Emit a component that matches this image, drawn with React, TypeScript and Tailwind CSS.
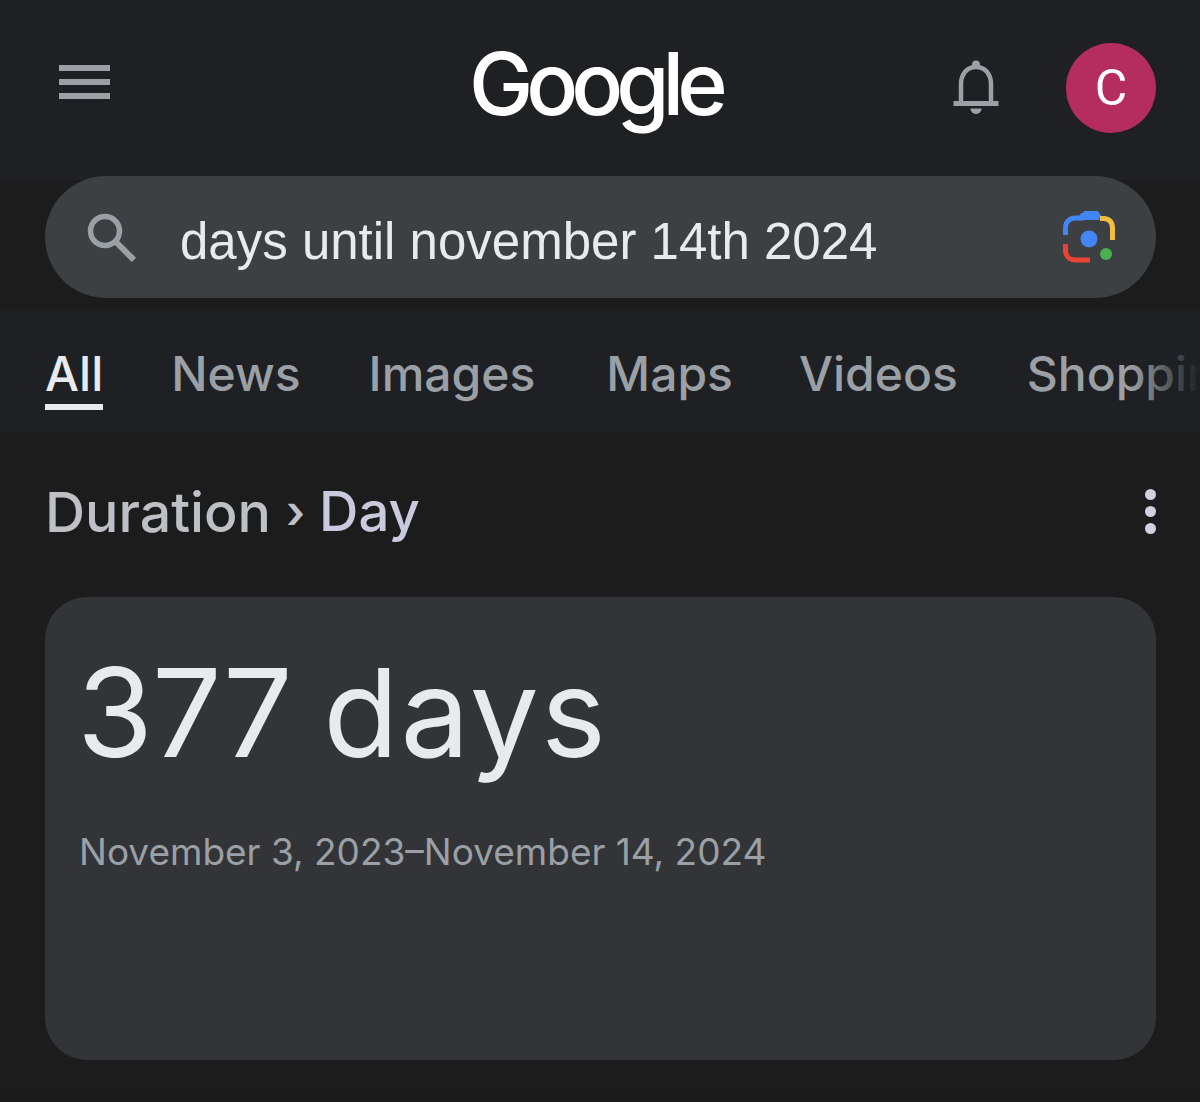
import React from 'react';

const tabs = [
  { label: 'News', className: 'ml-[68px]' },
  { label: 'Images', className: 'ml-[68px]' },
  { label: 'Maps', className: 'ml-[71px]' },
  { label: 'Videos', className: 'ml-[66px]' },
  { label: 'Shopping', className: 'ml-[69px]' },
];

const BellIcon = () => (
  <svg width="46" height="56" viewBox="0 0 46 56" fill="none">
    <circle cx="23" cy="4.5" r="4" fill="#9aa0a6" />
    <path d="M8 43V24C8 14 14 7 23 7s15 7 15 17v19" stroke="#9aa0a6" strokeWidth="4.5" />
    <rect x="0.5" y="41" width="45" height="5" fill="#9aa0a6" />
    <path d="M17.5 48.5h11c0 3-2.500 5.500-5.500 5.500s-5.500-2.500-5.500-5.500z" fill="#9aa0a6" />
  </svg>
);

const SearchIcon = () => (
  <svg width="50" height="50" viewBox="0 0 50 50" fill="none">
    <circle cx="19" cy="19" r="14.500" stroke="#9aa0a6" strokeWidth="5.500" />
    <path d="M29 29l19 19" stroke="#9aa0a6" strokeWidth="6" />
  </svg>
);

const LensIcon = () => (
  <svg width="52" height="52" viewBox="0 0 52 52" fill="none">
    <path d="M2.500 24v-7c0-6 4-10 10-10h7l3-4.500h11l3 4.500" stroke="#4285f4" strokeWidth="5" fill="none" />
    <path d="M18 2h15l4 7H14z" fill="#4285f4" />
    <path d="M37 7.500h3.500c6 0 9 4 9 10V29" stroke="#f3bd42" strokeWidth="5" />
    <path d="M2.500 33v6c0 6 4 10 10 10H27" stroke="#ea4335" strokeWidth="5" />
    <circle cx="26" cy="28" r="8.500" fill="#4285f4" />
    <circle cx="43" cy="43" r="6" fill="#4caf50" />
  </svg>
);

export default function App() {
  return (
    <div className="h-[1102px] w-[1200px] overflow-hidden bg-[#1c1c1d] font-['Inter',sans-serif]">
      {/* Header */}
      <header className="flex h-[180px] items-start bg-[#1f2023] pl-[59px]">
        <div className="mt-[65px] flex h-[34px] w-[51px] flex-col justify-between">
          <div className="h-[6px] bg-[#9aa0a6]" />
          <div className="h-[6px] bg-[#9aa0a6]" />
          <div className="h-[6px] bg-[#9aa0a6]" />
        </div>
        <div className="ml-[359px] mt-[29px] w-[282px] text-[86px] leading-[110px] font-medium tracking-[-7px] text-white">
          Google
        </div>
        <div className="ml-[202px] mt-[60px]">
          <BellIcon />
        </div>
        <div className="ml-[67px] mt-[43px] flex h-[90px] w-[90px] items-center justify-center rounded-full bg-[#b52c5f] text-[50px] text-white font-['Roboto',sans-serif]">
          C
        </div>
      </header>

      {/* Search */}
      <div className="relative mx-[45px] -mt-[4px] flex h-[122px] w-[1111px] items-center rounded-[61px] bg-[#3c4043] pl-[41px] pr-[41px]">
        <SearchIcon />
        <span className="ml-[44px] flex-1 pt-[8px] text-[51px] leading-none text-[#e8eaed] font-['Liberation_Sans',sans-serif]">
          days until november 14th 2024
        </span>
        <LensIcon />
      </div>

      {/* Tabs */}
      <nav className="relative mt-[12px] flex h-[122px] overflow-hidden whitespace-nowrap bg-[#1f2023] pl-[45px] text-[48px] font-medium text-[#9aa0a6]">
        <div className="relative pt-[28px] text-[#e8eaed]">
          All
          <div className="absolute bottom-[22px] left-0 right-0 h-[6px] bg-[#e8eaed]" />
        </div>
        {tabs.map((t) => (
          <div key={t.label} className={`${t.className} pt-[28px]`}>
            {t.label}
          </div>
        ))}
        <div className="absolute inset-y-0 right-0 w-[70px] bg-gradient-to-r from-transparent to-[#1f2023]" />
      </nav>

      {/* Breadcrumb */}
      <div className="flex h-[165px] items-center pb-[6px] pl-[45px] pr-[44px] font-medium">
        <span className="text-[55.500px] text-[#bdc1c6]">Duration</span>
        <span className="ml-[15px] text-[46px] font-semibold text-[#bdc1c6]">›</span>
        <span className="ml-[14px] text-[54.500px] text-[#c9cade]">Day</span>
        <div className="ml-auto flex flex-col gap-[6px]">
          <div className="h-[11px] w-[11px] rounded-full bg-[#d0d1e0]" />
          <div className="h-[11px] w-[11px] rounded-full bg-[#d0d1e0]" />
          <div className="h-[11px] w-[11px] rounded-full bg-[#d0d1e0]" />
        </div>
      </div>

      {/* Answer card */}
      <section className="mx-[45px] h-[463px] w-[1111px] rounded-[42px] bg-[#333438] pl-[32px] pt-[36px]">
        <div className="text-[123px] leading-[160px] text-[#e8eaed] [word-spacing:-3px]">
          <span className="tracking-[-1px]">377</span> <span className="tracking-[2px]">days</span>
        </div>
        <div className="ml-[2px] mt-[34px] text-[37px] leading-[50px] text-[#9aa0a6]">
          November 3, 2023–November 14, 2024
        </div>
      </section>

      <div className="mt-[32px] h-[10px] bg-[#1a1a1b]" />
    </div>
  );
}
